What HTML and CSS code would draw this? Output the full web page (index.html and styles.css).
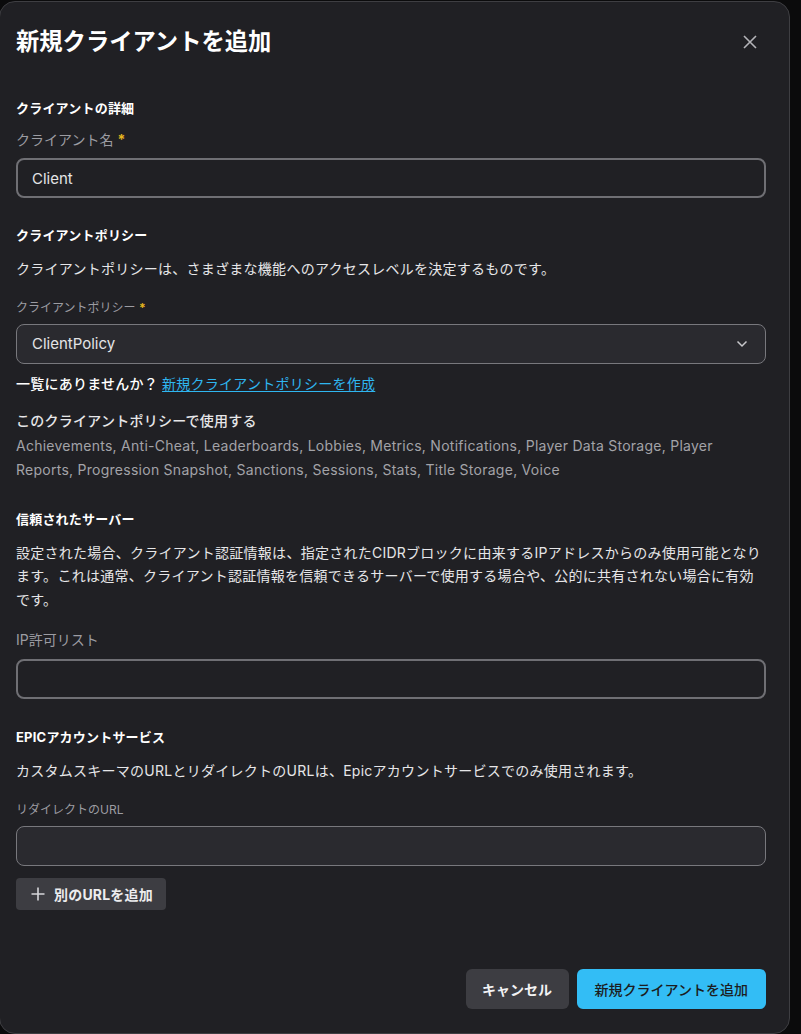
FILE: index.html
```html
<!DOCTYPE html>
<html lang="ja">

<head>
    <meta charset="UTF-8">
    <meta name="viewport" content="width=device-width, initial-scale=1.0">
    <title>新規クライアントを追加</title>
    <link rel="stylesheet" href="styles.css">
</head>

<body>
    <div class="modal">
        <div class="modalHeader">
            <h1 class="modalTitle">新規クライアントを追加</h1>
            <button class="closeButton" aria-label="閉じる">
                <svg width="14" height="14" viewBox="0 0 14 14">
                    <path d="M1 1L13 13M13 1L1 13" stroke="#b4b4b8" stroke-width="1.6" fill="none" />
                </svg>
            </button>
        </div>

        <div class="modalBody">
            <div class="section firstSection">
                <h2 class="sectionTitle">クライアントの詳細</h2>
                <label class="fieldLabel">クライアント名 <span class="required">*</span></label>
                <div class="textInput strong">Client</div>
            </div>

            <div class="section">
                <h2 class="sectionTitle">クライアントポリシー</h2>
                <p class="sectionText">クライアントポリシーは、さまざまな機能へのアクセスレベルを決定するものです。</p>
                <label class="fieldLabel small">クライアントポリシー <span class="required">*</span></label>
                <div class="textInput soft selectInput">
                    <span>ClientPolicy</span>
                    <svg width="12" height="8" viewBox="0 0 12 8">
                        <path d="M1.5 1.5L6 6L10.5 1.5" stroke="#c8c8cc" stroke-width="1.5" fill="none" />
                    </svg>
                </div>
                <p class="missingRow">一覧にありませんか？ <a href="#" class="createLink">新規クライアントポリシーを作成</a></p>
                <p class="usedTitle">このクライアントポリシーで使用する</p>
                <p class="featureList">Achievements, Anti-Cheat, Leaderboards, Lobbies, Metrics, Notifications, Player Data Storage, Player Reports, Progression Snapshot, Sanctions, Sessions, Stats, Title Storage, Voice</p>
            </div>

            <div class="section">
                <h2 class="sectionTitle">信頼されたサーバー</h2>
                <p class="sectionText">設定された場合、クライアント認証情報は、指定されたCIDRブロックに由来するIPアドレスからのみ使用可能となります。これは通常、クライアント認証情報を信頼できるサーバーで使用する場合や、公的に共有されない場合に有効です。</p>
                <label class="fieldLabel spaced">IP許可リスト</label>
                <div class="textInput strong ipInput"></div>
            </div>

            <div class="section epicSection">
                <h2 class="sectionTitle">EPICアカウントサービス</h2>
                <p class="sectionText">カスタムスキーマのURLとリダイレクトのURLは、Epicアカウントサービスでのみ使用されます。</p>
                <label class="fieldLabel small">リダイレクトのURL</label>
                <div class="textInput soft"></div>
                <button class="addUrlButton">
                    <svg width="14" height="14" viewBox="0 0 14 14">
                        <path d="M7 0.5V13.5M0.5 7H13.5" stroke="#d6d6da" stroke-width="1.6" fill="none" />
                    </svg>
                    別のURLを追加
                </button>
            </div>
        </div>

        <div class="modalFooter">
            <button class="cancelButton">キャンセル</button>
            <button class="primaryButton">新規クライアントを追加</button>
        </div>
    </div>
</body>

</html>
```

FILE: styles.css
```css
:root {
    --pageBg: #0b0b0c;
    --panelBg: #202024;
    --panelBorder: #3e3e42;
    --fieldBg: #2a2a2f;
    --textMain: #ffffff;
    --textBody: #e6e6e8;
    --textMuted: #9c9ca2;
    --accent: #33bdf5;
    --required: #e5b51e;
    --buttonGray: #3d3d42;
}

* {
    box-sizing: border-box;
}

body {
    margin: 0;
    background: var(--pageBg);
    font-family: Inter, "Noto Sans CJK JP", sans-serif;
    color: var(--textMain);
}

.modal {
    width: 791px;
    height: 1033px;
    margin: 1px 0 0 -1px;
    background: var(--panelBg);
    border: 1px solid var(--panelBorder);
    border-radius: 16px;
    padding: 0 23px 0 16px;
    display: flex;
    flex-direction: column;
}

.modalHeader {
    display: flex;
    justify-content: space-between;
    align-items: center;
    padding-top: 24px;
    height: 56px;
}

.modalTitle {
    margin: 0;
    font-size: 23.3px;
    line-height: 32px;
    font-weight: 700;
}

.closeButton {
    width: 32px;
    height: 32px;
    border: none;
    background: none;
    padding: 0;
    display: flex;
    align-items: center;
    justify-content: center;
    cursor: pointer;
}

.section {
    margin-top: 27px;
}

.firstSection {
    margin-top: 40px;
}

.epicSection {
    margin-top: 28px;
}

.sectionTitle {
    margin: 0;
    font-size: 13px;
    line-height: 20px;
    font-weight: 700;
    letter-spacing: 0.2px;
}

.sectionText {
    margin: 12px 0 0;
    font-size: 14px;
    line-height: 23.5px;
    letter-spacing: 0.26px;
    color: var(--textBody);
}

.fieldLabel {
    display: block;
    margin-top: 12px;
    font-size: 14px;
    line-height: 20px;
    color: var(--textMuted);
}

.fieldLabel.small {
    margin-top: 19px;
    font-size: 12px;
    line-height: 16px;
}

.fieldLabel.spaced {
    margin-top: 19px;
}

.required {
    color: var(--required);
    font-weight: 700;
}

.textInput {
    margin-top: 8px;
    height: 40px;
    border-radius: 8px;
    padding: 0 14px;
    display: flex;
    align-items: center;
    font-size: 15px;
    color: #e4e4e6;
}

.textInput.strong {
    border: 2px solid #6f6f74;
}

.textInput.ipInput {
    margin-top: 9px;
}

.textInput.soft {
    border: 1px solid #78787d;
    background: var(--fieldBg);
    padding: 0 15px;
}

.selectInput {
    justify-content: space-between;
}

.selectInput svg {
    margin-right: 2px;
}

.missingRow {
    margin: 10px 0 0;
    font-size: 14px;
    line-height: 20px;
    font-weight: 500;
    letter-spacing: 0.25px;
}

.createLink {
    color: #2fb6f0;
    font-weight: 400;
    text-decoration: underline;
    text-underline-offset: 2px;
}

.usedTitle {
    margin: 15px 0 0;
    font-size: 14px;
    line-height: 24px;
    font-weight: 500;
    letter-spacing: 0.25px;
    color: var(--textBody);
}

.featureList {
    margin: 1px 0 0;
    font-size: 14px;
    line-height: 24px;
    letter-spacing: 0.26px;
    color: #a3a3a8;
}

.addUrlButton {
    margin-top: 12px;
    height: 32px;
    padding: 0 13px 0 15px;
    border: none;
    border-radius: 4px;
    background: var(--buttonGray);
    color: #ececee;
    font-family: inherit;
    font-size: 14px;
    font-weight: 700;
    letter-spacing: 0.2px;
    display: flex;
    align-items: center;
    gap: 9px;
}

.modalFooter {
    margin-top: auto;
    padding-bottom: 24px;
    display: flex;
    justify-content: flex-end;
    gap: 8px;
}

.cancelButton,
.primaryButton {
    height: 40px;
    border: none;
    border-radius: 6px;
    font-family: inherit;
    font-size: 14px;
    cursor: pointer;
}

.cancelButton {
    padding: 0 16.5px;
    background: var(--buttonGray);
    color: #f2f2f4;
    font-weight: 700;
}

.primaryButton {
    padding: 0 18px;
    background: var(--accent);
    color: #1c1c20;
    font-weight: 500;
}
```
